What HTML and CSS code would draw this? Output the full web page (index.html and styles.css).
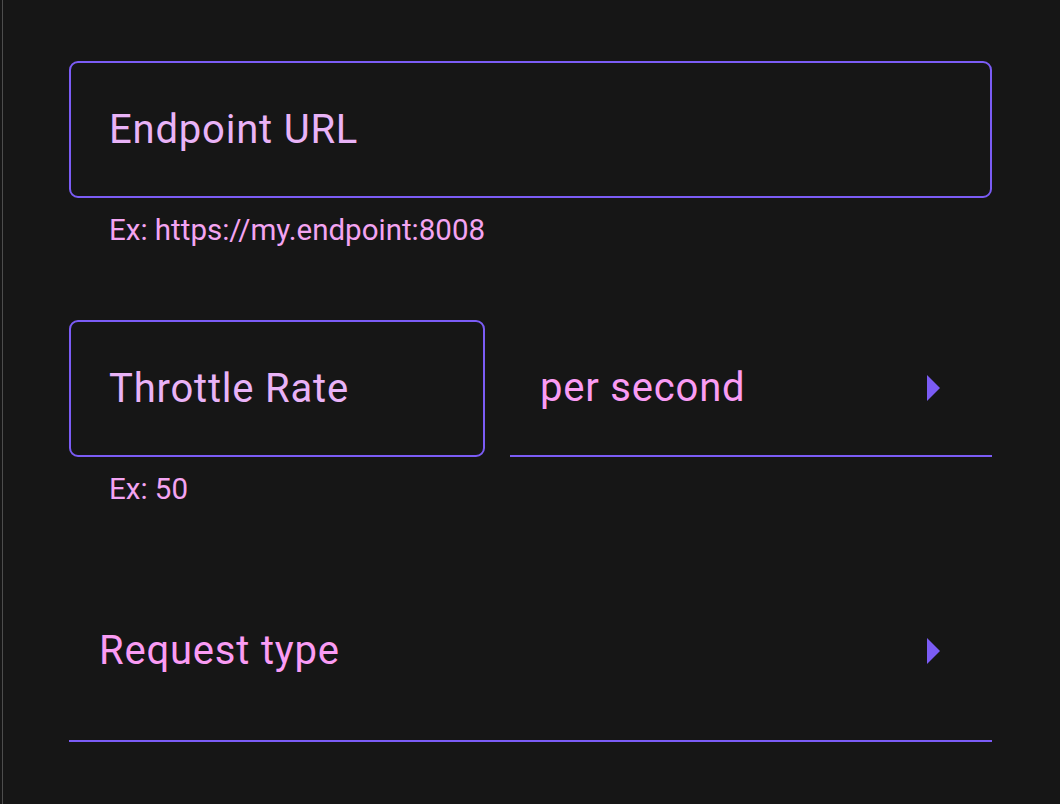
FILE: index.html
```html
<!DOCTYPE html>
<html>
<head>
<meta charset="utf-8">
<title>Endpoint settings</title>
<link rel="stylesheet" href="styles.css">
</head>
<body>
<div class="frame">
  <form class="settings">
    <div class="field">
      <div class="outlined wide">
        <span class="label">Endpoint URL</span>
      </div>
      <div class="hint">Ex: https://my.endpoint:8008</div>
    </div>

    <div class="row">
      <div class="field">
        <div class="outlined narrow">
          <span class="label">Throttle Rate</span>
        </div>
        <div class="hint">Ex: 50</div>
      </div>
      <div class="select unit">
        <span class="value">per second</span>
        <svg class="arrow" width="14" height="26" viewBox="0 0 14 26"><path d="M0 0 L13 13 L0 26 Z" fill="#7b5cf5"/></svg>
      </div>
    </div>

    <div class="select request">
      <span class="value">Request type</span>
      <svg class="arrow" width="14" height="26" viewBox="0 0 14 26"><path d="M0 0 L13 13 L0 26 Z" fill="#7b5cf5"/></svg>
    </div>
  </form>
</div>
</body>
</html>
```

FILE: styles.css
```css
html, body {
  margin: 0;
  height: 100%;
  background-color: #161616;
}

body {
  padding-left: 2px;
  box-sizing: border-box;
  font-family: Roboto, "Noto Sans", sans-serif;
}

.frame {
  height: 100%;
  border-left: 1px solid #4d4d4d;
  padding: 61px 0 0 66px;
  box-sizing: border-box;
}

.settings {
  width: 923px;
  display: flex;
  flex-direction: column;
}

.outlined {
  height: 137px;
  box-sizing: border-box;
  border: 2px solid #7b5cf5;
  border-radius: 9px;
  display: flex;
  align-items: center;
  padding-left: 38px;
}

.wide {
  width: 923px;
}

.narrow {
  width: 416px;
}

.label {
  font-size: 40px;
  color: #e9b3f7;
  letter-spacing: 0.8px;
}

.hint {
  font-size: 29.5px;
  color: #f3a4f2;
  padding: 15px 0 0 40px;
  height: 122px;
  box-sizing: border-box;
}

.row {
  display: flex;
  gap: 25px;
  align-items: flex-start;
}

.select {
  display: flex;
  align-items: center;
  justify-content: space-between;
  box-sizing: border-box;
  border-bottom: 2px solid #7b5cf5;
  padding: 0 51px 0 30px;
}

.unit {
  width: 482px;
  height: 137px;
}

.request {
  width: 923px;
  height: 181px;
  margin-top: -18px;
}

.value {
  font-size: 40px;
  color: #fa9cf4;
  letter-spacing: 0.8px;
}

.arrow {
  display: block;
}
```
